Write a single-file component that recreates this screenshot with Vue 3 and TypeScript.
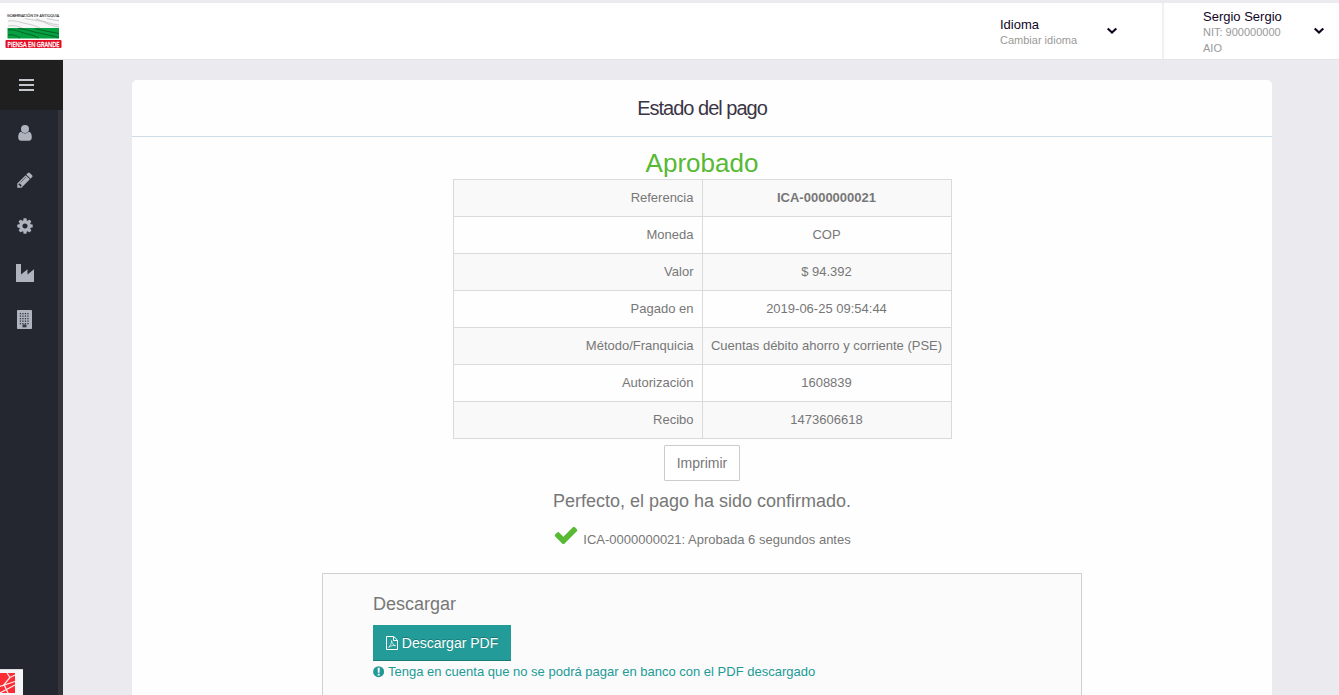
<script setup lang="ts">
interface Row {
  label: string
  value: string
  strong?: boolean
}

const rows: Row[] = [
  { label: 'Referencia', value: 'ICA-0000000021', strong: true },
  { label: 'Moneda', value: 'COP' },
  { label: 'Valor', value: '$ 94.392' },
  { label: 'Pagado en', value: '2019-06-25 09:54:44' },
  { label: 'Método/Franquicia', value: 'Cuentas débito ahorro y corriente (PSE)' },
  { label: 'Autorización', value: '1608839' },
  { label: 'Recibo', value: '1473606618' },
]

const windowColumns = [3.5, 6, 8.5, 11]
const windowRows = [3, 5.5, 8, 10.5, 13]
</script>

<template>
  <div class="page">
    <header class="topbar">
      <svg class="logo" width="58" height="42" viewBox="0 -4 58 42">
        <text x="2" y="7" class="logo-top" textLength="52" lengthAdjust="spacingAndGlyphs">GOBERNACIÓN DE ANTIOQUIA</text>
        <rect x="2.5" y="8" width="51.5" height="10" fill="#f7f7f8" />
        <g fill="none" stroke="#b9b9bc" stroke-width=".7">
          <path d="M20 8.500c9 2 17 2 22 5 4 2 8 3 12 3.500M31 9c7 2 14 5 23 6M3 11c9-1 13 2 20 3 5 1 10 3 12 4M3 16c6-1 10 0 14 2M42 8.500c4 1 8 2 12 2" />
        </g>
        <rect x="2.500" y="18" width="51.500" height="10.500" fill="#05a03f" />
        <g fill="none" stroke="#075b2c" stroke-width=".9">
          <path d="M3 20c8-1 14 3 20 4 5 1 8 3 11 4M13 18.500c10 1 16 4 24 5 6 1 11 3 17 4M3 25c5-1 9 1 12 3M30 18.500c7 2 14 3 24 5" />
        </g>
        <rect x=".5" y="30" width="56" height="8" rx="1" fill="#e30d24" />
        <text x="2.500" y="36.500" class="logo-bottom" textLength="52" lengthAdjust="spacingAndGlyphs">PIENSA EN GRANDE</text>
      </svg>
      <div class="menu language">
        <div>
          <div class="menu-title">Idioma</div>
          <div class="menu-sub">Cambiar idioma</div>
        </div>
        <svg class="chevron" width="12" height="8" viewBox="0 0 12 8"><path d="M1.700 1.500L6 5.500l4.300-4" /></svg>
      </div>
      <div class="menu account">
        <div>
          <div class="menu-title">Sergio Sergio</div>
          <div class="menu-sub">NIT: 900000000</div>
          <div class="menu-sub">AIO</div>
        </div>
        <svg class="chevron" width="12" height="8" viewBox="0 0 12 8"><path d="M1.700 1.500L6 5.500l4.300-4" /></svg>
      </div>
    </header>

    <div class="body">
      <nav class="sidebar">
        <div class="toggle">
          <svg width="15" height="12" viewBox="0 0 15 12"><path d="M0 0h15v2H0zM0 5h15v2H0zM0 10h15v2H0z" fill="#c3c6cc" /></svg>
        </div>
        <div class="nav-item">
          <svg width="18" height="18" viewBox="0 0 18 18">
            <circle cx="9" cy="5" r="4" />
            <path d="M5.300 7.800C3 8.100 2.200 10.500 2.200 13.300c0 2.200 1.100 3.500 2.800 3.500h8c1.700 0 2.800-1.300 2.800-3.500 0-2.800-.8-5.200-3.100-5.500C11.600 8.900 10.500 9.500 9 9.500s-2.600-.6-3.700-1.700z" />
          </svg>
        </div>
        <div class="nav-item">
          <svg width="18" height="18" viewBox="0 0 1792 1792">
            <path d="M491 1536l91-91-235-235-91 91v107h128v128h107zm523-928q0-22-22-22-10 0-17 7l-542 542q-7 7-7 17 0 22 22 22 10 0 17-7l542-542q7-7 7-17zm-54-192l416 416-832 832h-416v-416zm683 96q0 53-37 90l-166 166-416-416 166-165q36-38 90-38 53 0 91 38l235 234q37 39 37 91z" />
          </svg>
        </div>
        <div class="nav-item">
          <svg width="18" height="18" viewBox="0 0 1792 1792">
            <path d="M1152 896q0-106-75-181t-181-75-181 75-75 181 75 181 181 75 181-75 75-181zm512-109v222q0 12-8 23t-20 13l-185 28q-19 54-39 91 35 50 107 138 10 12 10 25t-9 23q-27 37-99 108t-94 71q-12 0-26-9l-138-108q-44 23-91 38-16 136-29 186-7 28-36 28h-222q-14 0-24.500-8.500t-11.500-21.500l-28-184q-49-16-90-37l-141 107q-10 9-25 9-14 0-25-11-126-114-165-168-7-10-7-23 0-12 8-23 15-21 51-66.500t54-70.500q-27-50-41-99l-183-27q-13-2-21-12.500t-8-23.500v-222q0-12 8-23t19-13l186-28q14-46 39-92-40-57-107-138-10-12-10-24 0-10 9-23 26-36 98.500-107.500t94.500-71.500q13 0 26 10l138 107q44-23 91-38 16-136 29-186 7-28 36-28h222q14 0 24.500 8.500t11.500 21.500l28 184q49 16 90 37l142-107q9-9 24-9 13 0 25 10 129 119 165 170 7 8 7 22 0 12-8 23-15 21-51 66.500t-54 70.500q26 50 41 98l183 28q13 2 21 12.500t8 23.500z" />
          </svg>
        </div>
        <div class="nav-item">
          <svg width="18" height="18" viewBox="0 0 18 18"><path d="M0 0h5v10.500l6.500-5.300v5.300L18 5.200V18H0z" /></svg>
        </div>
        <div class="nav-item">
          <svg width="15" height="19" viewBox="0 0 15 19">
            <rect width="15" height="19" rx=".8" />
            <g fill="#343944">
              <template v-for="y in windowRows" :key="y">
                <rect v-for="x in windowColumns" :key="x" :x="x - 0.7" :y="y" width="1.300" height="1.300" />
              </template>
              <rect x="5.500" y="14.500" width="4" height="2.800" />
            </g>
          </svg>
        </div>
      </nav>

      <main class="content">
        <section class="card">
          <h1 class="card-title">Estado del pago</h1>
          <div class="card-body">
            <h2 class="status">Aprobado</h2>
            <table class="details">
              <tbody>
                <tr v-for="row in rows" :key="row.label">
                  <td class="label">{{ row.label }}</td>
                  <td class="value" :class="{ strong: row.strong }">{{ row.value }}</td>
                </tr>
              </tbody>
            </table>
            <button class="print" type="button">Imprimir</button>
            <p class="confirm">Perfecto, el pago ha sido confirmado.</p>
            <div class="approved">
              <svg class="check" width="26" height="26" viewBox="0 0 1792 1792">
                <path d="M1671 566q0 40-28 68l-724 724-136 136q-28 28-68 28t-68-28l-136-136-362-362q-28-28-28-68t28-68l136-136q28-28 68-28t68 28l294 295 656-657q28-28 68-28t68 28l136 136q28 28 28 68z" fill="#57b934" />
              </svg>
              <span>ICA-0000000021: Aprobada 6 segundos antes</span>
            </div>
            <div class="download">
              <h3 class="download-title">Descargar</h3>
              <button class="pdf" type="button">
                <svg width="12" height="14" viewBox="0 0 12 14" fill="none" stroke="#fff">
                  <path d="M.5.5h7.300l3.700 3.700v9.300H.5z" />
                  <path d="M7.500.8v3.700h3.700" />
                  <path d="M5.600 4.500c.7 3.200 1.700 4.600 4 5.200-2.400-.7-4.600 0-7 1.700C4.400 10 5.600 7.300 5.600 4.500z" stroke-width=".7" />
                </svg>
                <span>Descargar PDF</span>
              </button>
              <div class="note">
                <svg width="12" height="12" viewBox="0 0 12 12">
                  <circle cx="5.600" cy="5.700" r="5.500" fill="#219a97" />
                  <path d="M4.600 1.800h2.200l-.3 4.900H4.900zM4.700 7.700h2v1.900h-2z" fill="#fbfbfb" />
                </svg>
                <span>Tenga en cuenta que no se podrá pagar en banco con el PDF descargado</span>
              </div>
            </div>
          </div>
        </section>
      </main>
    </div>

    <svg class="badge" width="23" height="26" viewBox="0 0 23 26">
      <rect width="23" height="26" fill="#f5f5f7" />
      <rect width="23" height="1" fill="#dadadd" />
      <rect y="4" width="15" height="20" fill="#fb2c33" />
      <path d="M0 17.500L15 12.500M7 4l3 4.500L15 6M10 8.500L4 15.500l4 8.500M15 16L0 24" fill="none" stroke="#fbe9ea" stroke-width="1.300" />
    </svg>
  </div>
</template>

<style>
html,
body {
  overflow: hidden;
}
</style>

<style scoped>
.page {
  position: relative;
  display: flex;
  flex-direction: column;
  box-sizing: border-box;
  height: 695px;
  padding-top: 3px;
  overflow: hidden;
  background: #ebeaef;
  color: #777;
  font: 13px/20px "Liberation Sans", Arial, sans-serif;
}
.topbar {
  display: flex;
  flex: none;
  height: 56px;
  border-bottom: 1px solid #e4e4e8;
  background: #fff;
}
.logo {
  margin: 3px auto 0 5px;
  overflow: visible;
}
.logo-top {
  font: 4px "Open Sans", sans-serif;
  fill: #222;
  stroke: #222;
  stroke-width: 0.1px;
}
.logo-bottom {
  font: 6.800px "Open Sans", sans-serif;
  fill: #fff;
  stroke: #fff;
  stroke-width: 0.3px;
}
.menu {
  display: flex;
  box-sizing: border-box;
  justify-content: space-between;
}
.language {
  width: 162px;
  padding: 14px 44px 0 0;
}
.account {
  width: 177px;
  padding: 6px 14px 0 39px;
  border-left: 2px solid #f0f0f3;
}
.menu-title {
  color: #10061f;
  line-height: 15px;
}
.menu-sub {
  color: #999;
  font-size: 11px;
  line-height: 16px;
}
.chevron {
  margin-top: 10px;
  fill: none;
  stroke: #10061f;
  stroke-width: 2.2;
}
.account .chevron {
  margin-top: 18px;
}
.body {
  display: flex;
  flex: 1;
  min-height: 0;
}
.sidebar {
  box-sizing: border-box;
  flex: none;
  width: 63px;
  border-right: 5px solid #34353b;
  background: #24272f;
}
.toggle {
  display: flex;
  box-sizing: border-box;
  align-items: center;
  width: 63px;
  height: 50px;
  padding-left: 19px;
  background: #1f1f1f;
}
.nav-item {
  display: flex;
  align-items: center;
  justify-content: center;
  width: 49px;
  height: 46.500px;
  fill: #aeb3be;
}
.content {
  flex: 1;
  padding: 20px 67px 0 69px;
}
.card {
  height: 640px;
  border-radius: 5px 5px 0 0;
  background: #fefefe;
}
.card-title {
  height: 56px;
  margin: 0;
  border-bottom: 1px solid #cddce6;
  color: #3a3545;
  font-size: 20px;
  font-weight: 400;
  letter-spacing: -1px;
  line-height: 56px;
  text-align: center;
}
.card-body {
  display: flex;
  flex-direction: column;
  align-items: center;
}
.status {
  margin: 10px 0 0;
  color: #57b934;
  font-size: 26px;
  font-weight: 400;
  line-height: 32px;
}
.details {
  width: 499px;
  border-collapse: collapse;
  table-layout: fixed;
}
.details td {
  box-sizing: border-box;
  height: 37px;
  padding: 0 8px;
  border: 1px solid #dadada;
  white-space: nowrap;
}
.details tr:nth-child(odd) {
  background: #f9f9f9;
}
.label {
  text-align: right;
}
.value {
  text-align: center;
}
.strong {
  font-weight: 700;
}
.print {
  box-sizing: border-box;
  width: 76px;
  height: 36px;
  margin-top: 6px;
  padding: 0;
  border: 1px solid #ccc;
  border-radius: 1px;
  background: #fff;
  color: #777;
  font: 14px/20px "Liberation Sans", Arial, sans-serif;
}
.confirm {
  margin: 10px 0 0;
  font-size: 18px;
  line-height: 20px;
}
.approved {
  display: flex;
  align-items: flex-start;
  height: 51px;
  margin-top: 11px;
}
.approved span {
  margin: 8px 0 0 4px;
}
.download {
  box-sizing: border-box;
  width: 760px;
  height: 200px;
  padding: 20px 50px;
  border: 1px solid #d0d0d0;
  background: #fbfbfb;
}
.download-title {
  margin: 0;
  font-size: 18px;
  font-weight: 400;
  line-height: 20px;
}
.pdf {
  display: flex;
  box-sizing: border-box;
  align-items: center;
  justify-content: center;
  gap: 4px;
  width: 138px;
  height: 36px;
  margin-top: 11px;
  padding: 0;
  border: 0;
  border-bottom: 1px solid #187c79;
  background: #239b98;
  color: #fff;
  font: 14px/20px "Liberation Sans", Arial, sans-serif;
  text-shadow: 0 -1px 0 rgba(0, 0, 0, 0.25);
}
.note {
  display: flex;
  align-items: center;
  gap: 3px;
  margin-top: 1px;
  color: #219a97;
}
.badge {
  position: absolute;
  bottom: 0;
  left: 0;
}
</style>
